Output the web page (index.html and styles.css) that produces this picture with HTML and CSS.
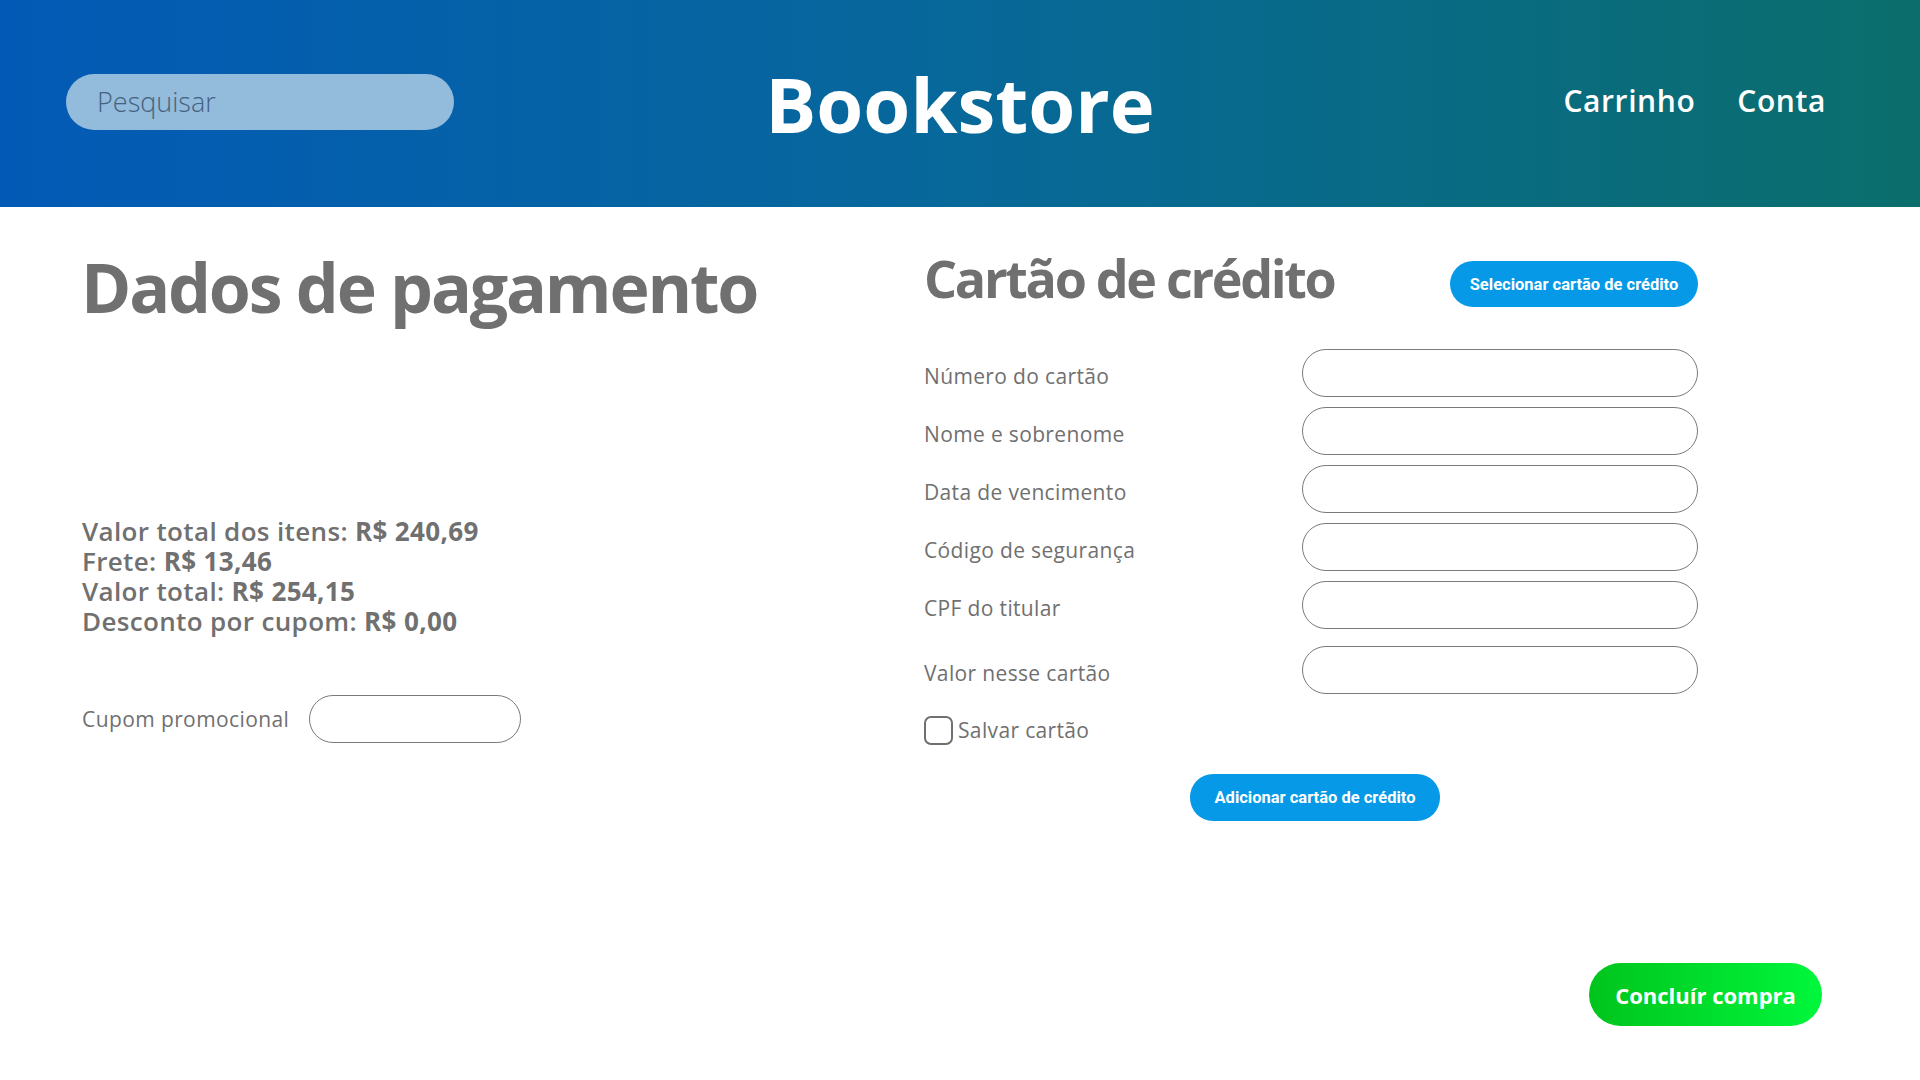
FILE: index.html
```html
<!DOCTYPE html>
<html lang="pt-BR">
<head>
<meta charset="utf-8">
<title>Bookstore - Dados de pagamento</title>
<link rel="stylesheet" href="styles.css">
</head>
<body>
<header class="topbar">
  <div class="search-wrap">
    <input class="search" type="text" placeholder="Pesquisar">
  </div>
  <h1 class="brand">Bookstore</h1>
  <nav class="nav">
    <a href="#">Carrinho</a>
    <a href="#">Conta</a>
  </nav>
</header>

<main class="content">
  <section class="summary-col">
    <h2 class="page-title">Dados de pagamento</h2>
    <div class="totals">
      <p><span class="lbl">Valor total dos itens:</span> <b>R$ 240,69</b></p>
      <p><span class="lbl">Frete:</span> <b>R$ 13,46</b></p>
      <p><span class="lbl">Valor total:</span> <b>R$ 254,15</b></p>
      <p><span class="lbl">Desconto por cupom:</span> <b>R$ 0,00</b></p>
    </div>
    <div class="coupon">
      <label class="coupon-label">Cupom promocional</label>
      <input class="field coupon-field" type="text">
    </div>
  </section>

  <section class="card-col">
    <div class="card-head">
      <h2 class="card-title">Cartão de crédito</h2>
      <button class="btn-blue btn-select">Selecionar cartão de crédito</button>
    </div>
    <div class="form">
      <label class="form-label">Número do cartão</label>
      <input class="field" type="text">
      <label class="form-label">Nome e sobrenome</label>
      <input class="field" type="text">
      <label class="form-label">Data de vencimento</label>
      <input class="field" type="text">
      <label class="form-label">Código de segurança</label>
      <input class="field" type="text">
      <label class="form-label">CPF do titular</label>
      <input class="field" type="text">
      <label class="form-label last">Valor nesse cartão</label>
      <input class="field last" type="text">
    </div>
    <label class="save">
      <span class="checkbox"></span>
      <span>Salvar cartão</span>
    </label>
    <div class="add-row">
      <button class="btn-blue btn-add">Adicionar cartão de crédito</button>
    </div>
  </section>
</main>

<footer class="footer">
  <button class="btn-finish">Concluír compra</button>
</footer>
</body>
</html>
```

FILE: styles.css
```css
* { box-sizing: border-box; }

html, body {
  margin: 0;
  padding: 0;
  background: #ffffff;
  font-family: "Open Sans", "Noto Sans", sans-serif;
  color: #707070;
}

.topbar {
  height: 207px;
  background: linear-gradient(90deg, #035ab6 0%, #07689a 50%, #0b6e6c 100%);
  display: grid;
  grid-template-columns: 1fr auto 1fr;
  align-items: center;
  padding: 0 66px;
}

.search {
  width: 388px;
  height: 56px;
  border: none;
  border-radius: 28px;
  background: #93bbdc;
  padding: 0 0 0 31px;
  font-family: "Open Sans", sans-serif;
  font-size: 27px;
  font-weight: 300;
  color: #3f5f7e;
  outline: none;
  margin-top: -4px;
}
.search::placeholder { color: #45627f; }

.brand {
  margin: 0;
  color: #ffffff;
  font-size: 76px;
  font-weight: 700;
  line-height: 1;
  letter-spacing: 0;
}

.nav {
  justify-self: end;
  display: flex;
  gap: 42px;
  margin-right: 28px;
  margin-top: -6px;
}
.nav a {
  color: #ffffff;
  text-decoration: none;
  font-size: 30px;
  font-weight: 600;
  letter-spacing: 0.6px;
}

.content {
  display: grid;
  grid-template-columns: 843px 774px;
  padding: 44px 0 0 81px;
}

.page-title {
  margin: 2px 0 0 0;
  font-size: 68px;
  font-weight: 700;
  line-height: 1;
  letter-spacing: -2.2px;
  color: #707070;
}

.totals {
  margin-top: 195px;
  margin-left: 1px;
}
.totals p {
  margin: 0;
  font-size: 26px;
  line-height: 30px;
  letter-spacing: 0.35px;
}
.totals .lbl { font-weight: 600; }
.totals b { font-weight: 700; }

.coupon {
  margin-top: 59px;
  display: flex;
  align-items: center;
  gap: 20px;
  margin-left: 1px;
}
.coupon-label {
  font-size: 21px;
  letter-spacing: 0.4px;
}
.field {
  width: 396px;
  height: 48px;
  border: 1px solid #7a7a7a;
  border-radius: 24px;
  background: #fff;
  outline: none;
}
.coupon-field { width: 212px; }

.card-head {
  display: flex;
  justify-content: space-between;
  align-items: flex-start;
  height: 56px;
}
.card-title {
  margin: 1px 0 0 0;
  font-size: 52px;
  font-weight: 700;
  line-height: 1;
  letter-spacing: -2.3px;
}
.btn-blue {
  border: none;
  background: #0699e7;
  color: #ffffff;
  font-family: Roboto, "Liberation Sans", sans-serif;
  font-weight: 700;
  font-size: 16.5px;
  height: 46px;
  border-radius: 23px;
  cursor: pointer;
}
.btn-select {
  width: 248px;
  margin-top: 10px;
}

.form {
  margin-top: 42px;
  display: grid;
  grid-template-columns: 378px 396px;
  row-gap: 10px;
  align-items: center;
}
.form-label {
  font-size: 21px;
  letter-spacing: 0.35px;
  padding-top: 6px;
}
.form .last { margin-top: 7px; }

.save {
  display: flex;
  align-items: center;
  gap: 5px;
  margin-top: 22px;
  font-size: 21px;
  letter-spacing: 0.35px;
  height: 28px;
}
.checkbox {
  width: 29px;
  height: 29px;
  border: 2px solid #707070;
  border-radius: 7px;
}

.add-row {
  margin-top: 30px;
  display: flex;
  justify-content: center;
  padding-left: 8px;
}
.btn-add {
  width: 250px;
  height: 47px;
}

.footer {
  display: flex;
  justify-content: flex-end;
  padding-right: 98px;
  margin-top: 142px;
}
.btn-finish {
  width: 233px;
  height: 63px;
  border: none;
  border-radius: 32px;
  background: linear-gradient(90deg, #00c41c 0%, #00f73c 100%);
  color: #ffffff;
  font-family: "Open Sans", sans-serif;
  font-weight: 700;
  font-size: 22px;
  cursor: pointer;
}
```
